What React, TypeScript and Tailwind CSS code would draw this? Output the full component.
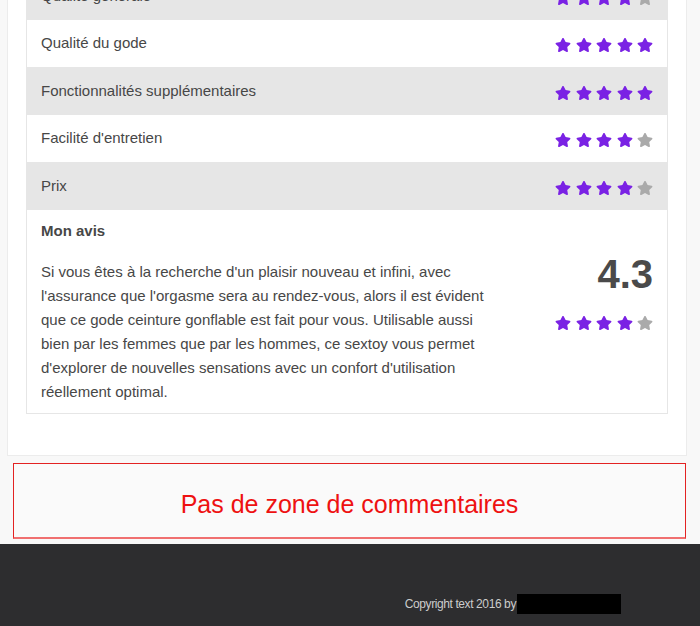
import { FaStar } from "react-icons/fa";

const criteria = [
  { label: "Qualité générale", score: 4, h: "h-[47px]", bg: "bg-[#e6e6e6]" },
  { label: "Qualité du gode", score: 5, h: "h-[47px]", bg: "bg-white" },
  { label: "Fonctionnalités supplémentaires", score: 5, h: "h-[48px]", bg: "bg-[#e6e6e6]" },
  { label: "Facilité d'entretien", score: 4, h: "h-[47px]", bg: "bg-white" },
  { label: "Prix", score: 4, h: "h-[48px]", bg: "bg-[#e6e6e6]" },
];

function Stars({ score }: { score: number }) {
  return (
    <div className="flex items-center gap-[4.5px]">
      {[1, 2, 3, 4, 5].map((i) => (
        <FaStar
          key={i}
          size={16}
          className={i <= score ? "text-[#7a22e4]" : "text-[#aaaaaa]"}
        />
      ))}
    </div>
  );
}

export default function App() {
  return (
    <div className="min-h-screen overflow-hidden bg-[#f8f8f8] font-['Liberation_Sans',Arial,sans-serif] text-[#474747]">
      {/* REVIEW CARD */}
      <div className="mt-[-48px] ml-[7px] mr-[13px] border border-[#ececec] bg-white px-[18px] pt-[19px] pb-[41px]">
        <div className="border border-[#e6e6e6]">
          {criteria.map((c) => (
            <div
              key={c.label}
              className={`flex items-center justify-between pl-[14px] pr-[14px] ${c.h} ${c.bg}`}
            >
              <span className="text-[15px]">{c.label}</span>
              <div className="pt-[3px]">
                <Stars score={c.score} />
              </div>
            </div>
          ))}

          <div className="px-[14px] pt-[10px] pb-[9px]">
            <p className="text-[15px] font-bold leading-[22px]">Mon avis</p>

            <div className="mt-[18px] flex justify-between">
              <p className="w-[450px] text-[15px] leading-[24px]">
                Si vous êtes à la recherche d'un plaisir nouveau et infini, avec
                l'assurance que l'orgasme sera au rendez-vous, alors il est
                évident que ce gode ceinture gonflable est fait pour vous.
                Utilisable aussi bien par les femmes que par les hommes, ce
                sextoy vous permet d'explorer de nouvelles sensations avec un
                confort d'utilisation réellement optimal.
              </p>

              <div className="flex flex-col items-end">
                <span className="mt-[-7px] text-[40px] font-bold leading-[42px] text-[#4a4a4a]">
                  4.3
                </span>
                <div className="mt-[20px]">
                  <Stars score={4} />
                </div>
              </div>
            </div>
          </div>
        </div>
      </div>

      {/* COMMENTS */}
      <div className="mt-[7px] ml-[13px] mr-[14px] flex h-[76px] items-center justify-center border border-b-2 border-[#e32222] border-b-[#f07070] bg-[#fafafa]">
        <p className="pt-[8px] text-[25px] text-[#ee1111]">
          Pas de zone de commentaires
        </p>
      </div>

      {/* FOOTER */}
      <footer className="mt-[5px] flex h-[90px] items-start justify-end bg-[#2d2d2f] pr-[79px] pt-[50px]">
        <div className="flex items-center">
          <span className="text-[12px] tracking-[-0.4px] text-[#cccccc]">
            Copyright text 2016 by
          </span>
          <span className="ml-[1px] h-[20px] w-[104px] bg-black" />
        </div>
      </footer>
    </div>
  );
}
